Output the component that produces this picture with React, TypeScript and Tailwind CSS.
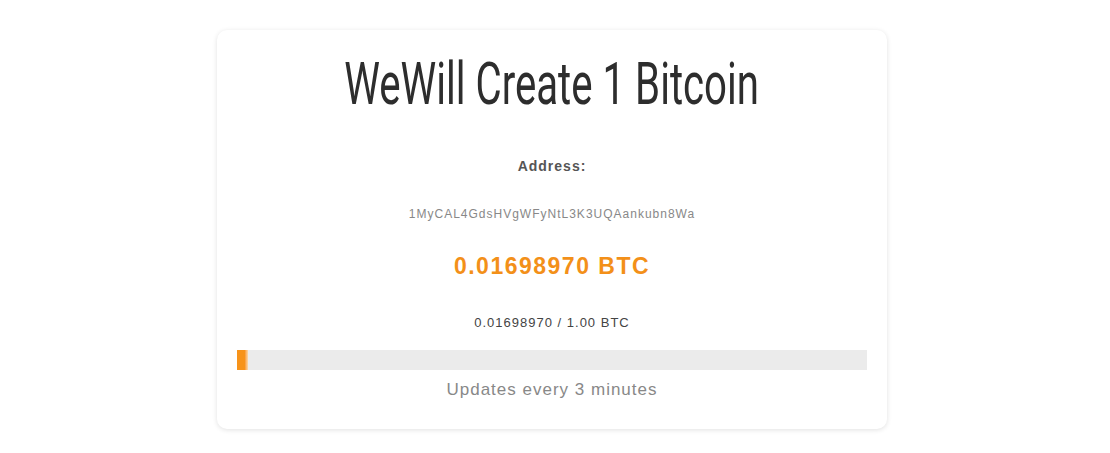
import React from 'react';

const address = '1MyCAL4GdsHVgWFyNtL3K3UQAankubn8Wa';
const raised = 0.0169897;
const goal = 1;

export default function App() {
  const pct = (raised / goal) * 100;

  return (
    <div className="min-h-[453px] bg-white pt-[30px] font-['Liberation_Sans',Arial,sans-serif]">
      <div className="ml-[217px] w-[670px] rounded-[10px] bg-white px-[20px] pb-[27px] pt-[22px] text-center shadow-[0_1px_5px_rgba(0,0,0,0.12)]">
        {/* no condensed face installed, so squeeze Roboto */}
        <h1 className="h-[64px] whitespace-nowrap font-['Roboto',sans-serif] text-[60px] font-normal leading-[64px] text-[#2d2d2d]">
          <span className="inline-block origin-center scale-x-[0.67]">WeWill Create 1 Bitcoin</span>
        </h1>

        <p className="mt-[40px] text-[14px] font-bold leading-[20px] tracking-[1px] text-[#555]">Address:</p>
        <p className="mt-[30px] text-[12px] leading-[17px] tracking-[1px] text-[#888]">{address}</p>

        <p className="mt-[27px] text-[23px] font-bold leading-[33px] tracking-[1.5px] text-[#f39019]">
          {raised.toFixed(8)} BTC
        </p>

        <p className="mt-[31px] text-[13px] leading-[18px] tracking-[1px] text-[#444]">
          {raised.toFixed(8)} / {goal.toFixed(2)} BTC
        </p>

        <div className="mt-[18px] h-[20px] w-full bg-[#ebebeb]">
          <div
            className="h-full bg-gradient-to-r from-[#f7931a] from-70% to-[#fcd9a8]"
            style={{ width: `${pct}%` }}
          />
        </div>

        <p className="mt-[8px] text-[17px] leading-[24px] tracking-[1px] text-[#888]">Updates every 3 minutes</p>
      </div>
    </div>
  );
}
